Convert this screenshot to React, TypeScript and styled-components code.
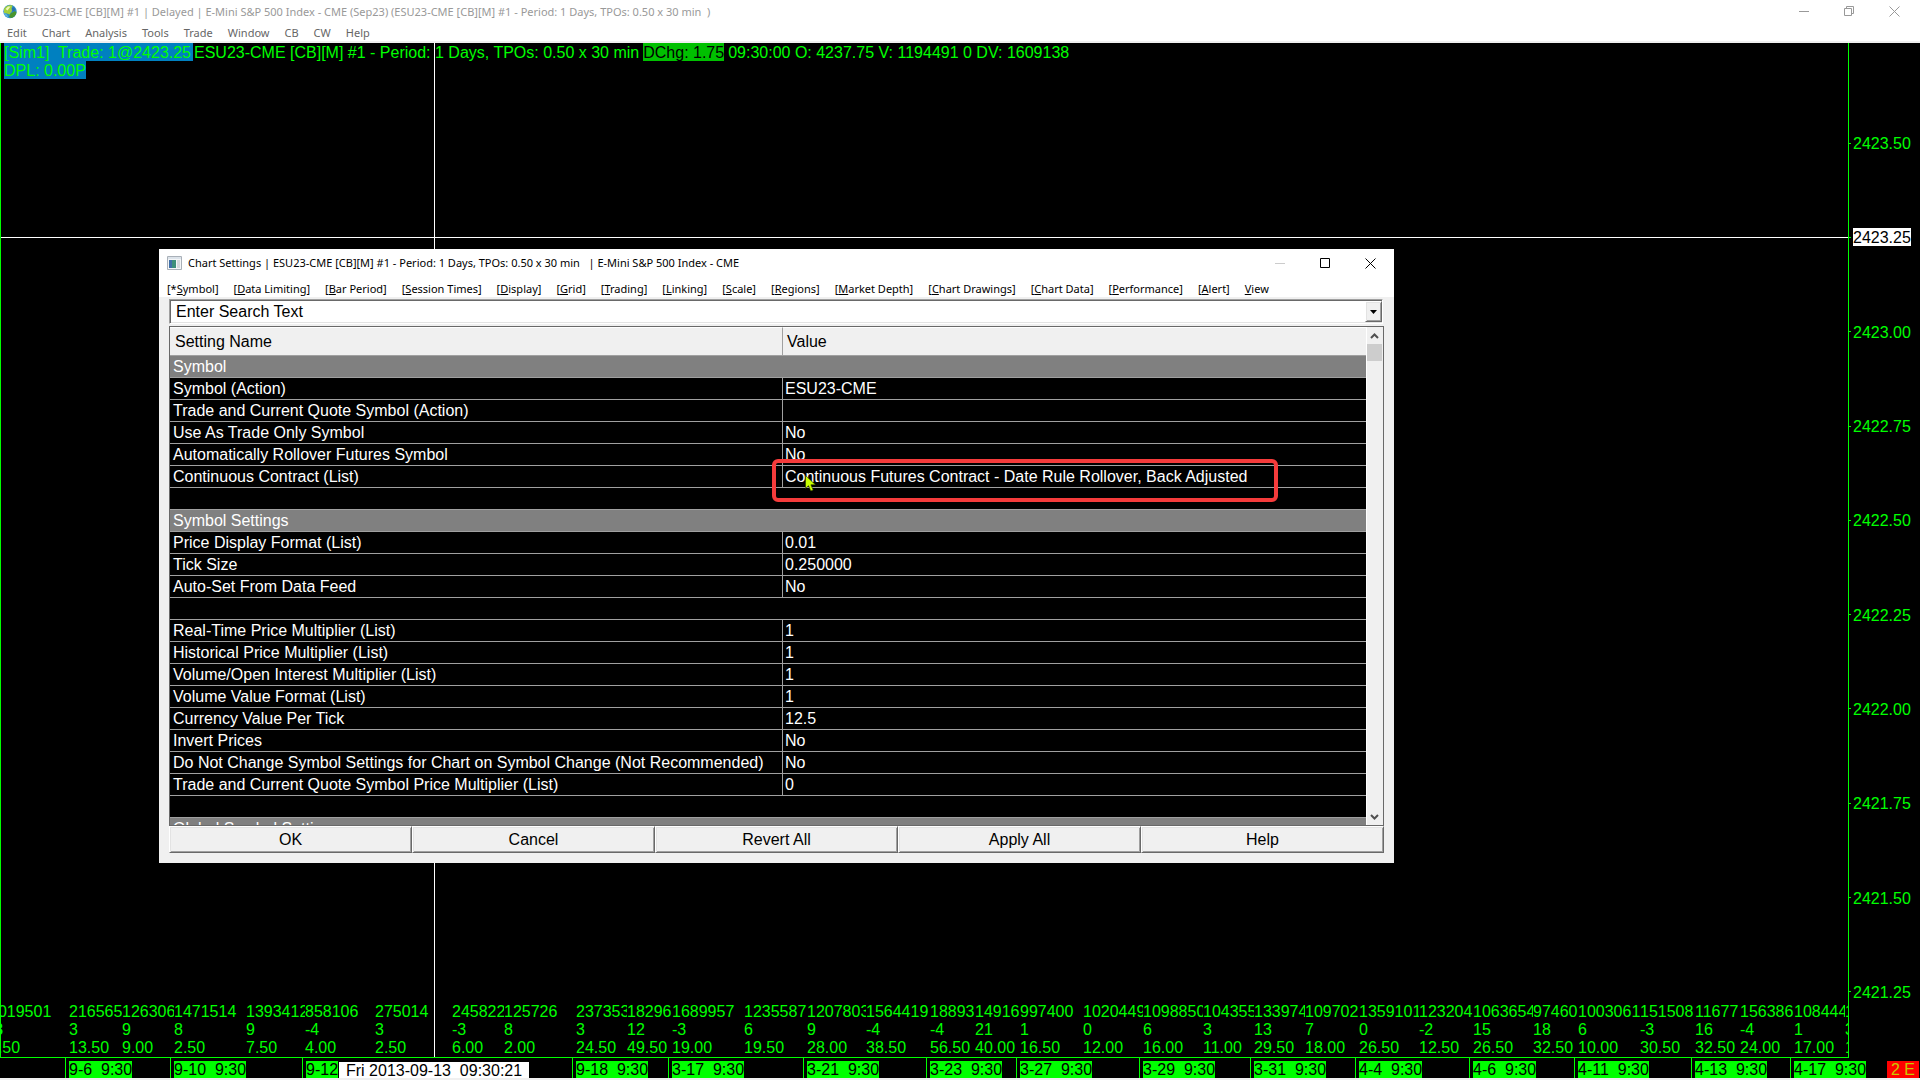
import React from "react";
import styled, { createGlobalStyle, css } from "styled-components";

const GREEN = "#00ff00";
const UI_FONT = `"Noto Sans", "Open Sans", sans-serif`;
const CHART_FONT = `"Liberation Sans", Arial, sans-serif`;

const GlobalStyle = createGlobalStyle`
  *, *::before, *::after { box-sizing: border-box; }
  body { margin: 0; background: #000; font-family: ${CHART_FONT}; font-size: 16px; }
  button, input { font: inherit; color: inherit; margin: 0; padding: 0; border: 0; border-radius: 0; background: none; }
`;

const Page = styled.div`
  display: flex;
  flex-direction: column;
  height: 100vh;
  overflow: hidden;
`;

/* ---------- Main window chrome ---------- */

const TitleBar = styled.header`
  display: flex;
  align-items: center;
  height: 23px;
  padding: 0 20px 0 3px;
  gap: 6px;
  background: #fff;
  color: #999;
  font: 11px/16px ${UI_FONT};
`;

const TitleText = styled.h1`
  flex: 1;
  margin: 0;
  font: inherit;
  white-space: pre;
`;

const WindowControls = styled.div<{ $gap: number }>`
  display: flex;
  gap: ${(p) => p.$gap}px;
`;

const ControlButton = styled.button<{ $color: string }>`
  display: flex;
  width: 11px;
  height: 11px;
  color: ${(p) => p.$color};
`;

const MenuBar = styled.nav`
  display: flex;
  align-items: center;
  height: 20px;
  padding: 2px 7px 0;
  gap: 15px;
  background: #fff;
  border-bottom: 2px solid #f0f0f0;
  color: #666;
  font: 11px/16px ${UI_FONT};
`;

const MenuButton = styled.button`
  white-space: nowrap;
`;

/* ---------- Chart ---------- */

const Chart = styled.main`
  position: relative;
  flex: 1;
  display: flex;
  flex-direction: column;
  min-height: 0;
  background: #000;
  color: ${GREEN};
  line-height: 18px;
`;

const ChartBody = styled.div`
  flex: 1;
  display: flex;
  min-height: 0;
`;

const Plot = styled.section`
  position: relative;
  flex: 1;
  min-width: 0;
  display: flex;
  flex-direction: column;
  justify-content: space-between;
  border-left: 1px solid ${GREEN};
  border-bottom: 1px solid ${GREEN};
`;

const Legend = styled.div`
  display: flex;
  flex-direction: column;
  align-items: flex-start;
  padding-left: 3px;
  line-height: 20px;
  white-space: pre;
`;

const LegendLine = styled.div`
  display: flex;
  height: 18px;
`;

const Trade = styled.span`
  padding-right: 2px;
  margin-right: 1px;
  background: #0080c0;
`;

const Position = styled.span`
  height: 18px;
  background: #0080c0;
`;

const Change = styled.span`
  margin: 0 4px;
  background: #00c000;
  color: #000;
`;

const VolumeStrip = styled.div`
  display: flex;
  overflow: hidden;
`;

const VolumeCell = styled.div<{ $width: number; $first: boolean }>`
  flex: none;
  width: ${(p) => p.$width}px;
  margin-left: ${(p) => (p.$first ? -12 : 0)}px;
  overflow: hidden;
  display: flex;
  flex-direction: column;
  white-space: nowrap;
`;

const PriceAxis = styled.aside`
  flex: none;
  display: flex;
  flex-direction: column;
  width: 72px;
  padding: 53px 0 19px;
  border-left: 1px solid ${GREEN};
`;

const PriceTick = styled.div`
  flex: 1;
  display: flex;
  align-items: center;
  gap: 2px;

  &::before {
    content: "";
    width: 2px;
    height: 1px;
    background: ${GREEN};
  }
`;

const PriceLabel = styled.span<{ $current: boolean }>`
  height: 18px;
  line-height: 19px;
  ${(p) =>
    p.$current &&
    css`
      background: #fff;
      color: #000;
    `}
`;

const TimeAxis = styled.footer`
  position: relative;
  display: flex;
  height: 20px;
  white-space: pre;
`;

const TimeSegment = styled.div<{ $width: number }>`
  flex: none;
  display: flex;
  align-items: flex-end;
  width: ${(p) => p.$width}px;
  padding-left: 3px;
  border-left: 1px solid ${GREEN};

  &:first-child {
    border-left-color: transparent;
  }
`;

const TimeLabel = styled.span`
  height: 17px;
  background: ${GREEN};
  color: #000;
`;

const CursorTime = styled.output`
  position: absolute;
  left: 339px;
  bottom: 0;
  height: 16px;
  padding: 0 7px;
  background: #fff;
  color: #000;
  line-height: 17px;
`;

const AlertBadge = styled.span`
  height: 17px;
  margin: auto 1px 0 auto;
  padding: 0 4px;
  background: #ff0000;
  color: #c8c800;
`;

const CrosshairX = styled.div`
  position: absolute;
  top: 194px;
  left: 0;
  right: 0;
  height: 1px;
  background: #fff;
`;

const CrosshairY = styled.div`
  position: absolute;
  top: 0;
  bottom: 0;
  left: 433px;
  width: 1px;
  background: #fff;
`;

const BottomEdge = styled.div`
  height: 2px;
  background: #f0f0f0;
`;

/* ---------- Settings dialog ---------- */

const Dialog = styled.section`
  position: absolute;
  top: 206px;
  left: 159px;
  display: flex;
  flex-direction: column;
  width: 1235px;
  height: 614px;
  background: #f0f0f0;
  color: #000;
`;

const DialogTitle = styled.header`
  display: flex;
  align-items: center;
  height: 28px;
  padding: 0 18px 0 8px;
  gap: 6px;
  background: #fff;
  font: 11px/16px ${UI_FONT};
`;

const DialogMenu = styled.nav`
  display: flex;
  align-items: center;
  height: 20px;
  padding: 4px 8px 0;
  gap: 15px;
  background: #fff;
  font: 11px/16px ${UI_FONT};
`;

const DialogBody = styled.div`
  flex: 1;
  display: flex;
  flex-direction: column;
  min-height: 0;
  padding: 2px 10px 10px;
`;

const SearchBox = styled.div`
  display: flex;
  height: 25px;
  margin: 0 1px 2px 0;
  border: 1px solid #a0a0a0;
  border-right-color: #fff;
  border-bottom-color: #fff;
  background: #fff;
  box-shadow: inset 1px 1px #696969, inset -1px -1px #e3e3e3;
`;

const SearchInput = styled.input`
  flex: 1;
  padding: 0 6px;
  outline: 0;

  &::placeholder {
    color: #000;
    opacity: 1;
  }
`;

const raised = css`
  border: 1px solid #fff;
  border-right-color: #696969;
  border-bottom-color: #696969;
  background: #f0f0f0;
  box-shadow: inset 1px 1px #e3e3e3, inset -1px -1px #a0a0a0;
`;

const DropButton = styled.button`
  ${raised}
  display: flex;
  align-items: center;
  justify-content: center;
  width: 17px;
  margin: 1px 0;
`;

const ListFrame = styled.div`
  flex: 1;
  display: flex;
  min-height: 0;
  overflow: hidden;
  border: 1px solid #696969;
  background: #000;
`;

const TableClip = styled.div`
  flex: 1;
  overflow: hidden;
`;

const SettingsTable = styled.table`
  width: 100%;
  table-layout: fixed;
  border-collapse: separate;
  border-spacing: 0;
  color: #fff;
  line-height: 21px;
`;

const HeadCell = styled.th<{ $width?: string }>`
  width: ${(p) => p.$width ?? "auto"};
  height: 29px;
  padding: 0 5px;
  border-top: 1px solid #fff;
  border-bottom: 1px solid #a0a0a0;
  background: #f0f0f0;
  color: #000;
  font-weight: 400;
  text-align: left;

  & + & {
    border-left: 1px solid #a0a0a0;
    padding: 0 4px;
  }
`;

const Cell = styled.td<{ $group?: boolean }>`
  height: 22px;
  padding: 0 3px;
  border-bottom: 1px solid #a0a0a0;
  background: ${(p) => (p.$group ? "#808080" : "#000")};
  white-space: nowrap;

  & + & {
    border-left: 1px solid #a0a0a0;
    padding: 0 2px;
  }
`;

const Scrollbar = styled.div`
  display: flex;
  flex-direction: column;
  width: 17px;
  border-left: 1px solid #fff;
  background: #f0f0f0;
`;

const ScrollButton = styled.button`
  display: flex;
  align-items: center;
  justify-content: center;
  height: 17px;
  padding-right: 1px;
  color: #505050;
`;

const ScrollTrack = styled.div`
  flex: 1;
`;

const ScrollThumb = styled.div`
  height: 17px;
  margin-right: 1px;
  background: #cdcdcd;
`;

const ButtonRow = styled.div`
  display: flex;
`;

const ActionButton = styled.button`
  ${raised}
  flex: 1;
  height: 27px;
`;

/* ---------- Overlays ---------- */

const Highlight = styled.div`
  position: absolute;
  top: 416px;
  left: 772px;
  width: 506px;
  height: 43px;
  border: 4px solid #f53b3b;
  border-radius: 6px;
`;

const Pointer = styled.svg`
  position: absolute;
  top: 432px;
  left: 805px;
`;

/* ---------- Icons ---------- */

const Globe = () => (
  <svg width="14" height="15" viewBox="0 0 14 15" aria-hidden="true">
    <circle cx="7" cy="7.5" r="6.7" fill="#2f8fc4" />
    <path d="M1 5C2.500 2 6 .5 9.500 1.500L8.500 4.500 9 7 6.500 10.500 4 9.500 1 9Z" fill="#a4cf3a" />
    <path d="M7.500 9.500 12 7 13.500 8.500C13 11 11 13.500 8.500 14L6 13Z" fill="#4a962c" />
    <path d="M9 4 11 3 12.500 6 9.500 8Z" fill="#2a6fae" />
    <path d="M2.500 5 5 2.500 7.500 2.500 4.500 6.500Z" fill="#eef8b8" />
    <path d="M1 8.500 4 10.500 5.500 13.500C3 13 1 11 1 8.500Z" fill="#5db4dd" />
  </svg>
);

const AppIcon = () => (
  <svg width="15" height="14" viewBox="0 0 15 14" aria-hidden="true">
    <path d="M.5.500h14v13H.500Z" fill="#f4f6f8" stroke="#a9b0b8" />
    <path d="M1 1h13v2H1Z" fill="#dce3ea" />
    <path d="M2 4h7v8H2Z" fill="#3d8f7a" />
    <path d="M2 4h3v8H2Z" fill="#3f6fa8" />
    <path d="M10 4h3v8h-3Z" fill="#d4d8dc" />
  </svg>
);

const MinimizeIcon = () => (
  <svg width="11" height="11" aria-hidden="true">
    <path d="M0 5.500h10" stroke="currentColor" />
  </svg>
);

const RestoreIcon = () => (
  <svg width="11" height="11" aria-hidden="true">
    <path d="M.5 2.500h7v7h-7ZM2.500 2.500v-2h7v7h-2" fill="none" stroke="currentColor" />
  </svg>
);

const MaximizeIcon = () => (
  <svg width="11" height="11" aria-hidden="true">
    <path d="M.5.500h9v9h-9Z" fill="none" stroke="currentColor" />
  </svg>
);

const CloseIcon = () => (
  <svg width="11" height="11" aria-hidden="true">
    <path d="M.5.500l10 10M10.500.500l-10 10" stroke="currentColor" />
  </svg>
);

const Chevron = ({ down }: { down?: boolean }) => (
  <svg width="9" height="6" aria-hidden="true">
    <path d={down ? "M1 1l3.500 3.500L8 1" : "M1 5l3.500-3.500L8 5"} fill="none" stroke="currentColor" strokeWidth="2" />
  </svg>
);

/* ---------- Data ---------- */

const mainMenu = ["Edit", "Chart", "Analysis", "Tools", "Trade", "Window", "CB", "CW", "Help"];

/* [text before the access key, access key, rest] */
const dialogMenu: [string, string, string][] = [
  ["[*", "S", "ymbol]"],
  ["[", "D", "ata Limiting]"],
  ["[", "B", "ar Period]"],
  ["[", "S", "ession Times]"],
  ["[", "D", "isplay]"],
  ["[", "G", "rid]"],
  ["[", "T", "rading]"],
  ["[", "L", "inking]"],
  ["[", "S", "cale]"],
  ["[", "R", "egions]"],
  ["[", "M", "arket Depth]"],
  ["[", "C", "hart Drawings]"],
  ["[", "C", "hart Data]"],
  ["[", "P", "erformance]"],
  ["[", "A", "lert]"],
  ["", "V", "iew"],
];

const prices = ["2423.50", "2423.25", "2423.00", "2422.75", "2422.50", "2422.25", "2422.00", "2421.75", "2421.50", "2421.25"];

/* [column width, volume, change, range] */
const sessions: [number, string, string, string][] = [
  [80, "1019501", "-3", "3.50"],
  [53, "216565", "3", "13.50"],
  [52, "126306", "9", "9.00"],
  [72, "1471514", "8", "2.50"],
  [59, "1393412", "9", "7.50"],
  [70, "858106", "-4", "4.00"],
  [77, "275014", "3", "2.50"],
  [52, "245822", "-3", "6.00"],
  [72, "125726", "8", "2.00"],
  [51, "237353", "3", "24.50"],
  [45, "18296", "12", "49.50"],
  [72, "1689957", "-3", "19.00"],
  [63, "1235587", "6", "19.50"],
  [59, "1207803", "9", "28.00"],
  [64, "1564419", "-4", "38.50"],
  [45, "18893", "-4", "56.50"],
  [45, "14916", "21", "40.00"],
  [63, "997400", "1", "16.50"],
  [60, "1020449", "0", "12.00"],
  [60, "1098850", "6", "16.00"],
  [51, "104355", "3", "11.00"],
  [51, "133974", "13", "29.50"],
  [54, "109702", "7", "18.00"],
  [60, "1359101", "0", "26.50"],
  [54, "123204", "-2", "12.50"],
  [60, "1063654", "15", "26.50"],
  [45, "97460", "18", "32.50"],
  [62, "1003061", "6", "10.00"],
  [55, "151508", "-3", "30.50"],
  [45, "11677", "16", "32.50"],
  [54, "156386", "-4", "24.00"],
  [51, "108444", "1", "17.00"],
  [9, "1", "3", "1"],
];

const dates: [number, string][] = [
  [65, ""],
  [105, "9-6  9:30"],
  [132, "9-10  9:30"],
  [270, "9-12"],
  [96, "9-18  9:30"],
  [135, "3-17  9:30"],
  [123, "3-21  9:30"],
  [90, "3-23  9:30"],
  [123, "3-27  9:30"],
  [111, "3-29  9:30"],
  [105, "3-31  9:30"],
  [114, "4-4  9:30"],
  [105, "4-6  9:30"],
  [117, "4-11  9:30"],
  [99, "4-13  9:30"],
  [75, "4-17  9:30"],
];

type Row = { group: string } | { name: string; value: string } | null;

const settings: Row[] = [
  { group: "Symbol" },
  { name: "Symbol (Action)", value: "ESU23-CME" },
  { name: "Trade and Current Quote Symbol (Action)", value: "" },
  { name: "Use As Trade Only Symbol", value: "No" },
  { name: "Automatically Rollover Futures Symbol", value: "No" },
  { name: "Continuous Contract (List)", value: "Continuous Futures Contract - Date Rule Rollover, Back Adjusted" },
  null,
  { group: "Symbol Settings" },
  { name: "Price Display Format (List)", value: "0.01" },
  { name: "Tick Size", value: "0.250000" },
  { name: "Auto-Set From Data Feed", value: "No" },
  null,
  { name: "Real-Time Price Multiplier (List)", value: "1" },
  { name: "Historical Price Multiplier (List)", value: "1" },
  { name: "Volume/Open Interest Multiplier (List)", value: "1" },
  { name: "Volume Value Format (List)", value: "1" },
  { name: "Currency Value Per Tick", value: "12.5" },
  { name: "Invert Prices", value: "No" },
  { name: "Do Not Change Symbol Settings for Chart on Symbol Change (Not Recommended)", value: "No" },
  { name: "Trade and Current Quote Symbol Price Multiplier (List)", value: "0" },
  null,
  { group: "Global Symbol Settings" },
];

const SettingRow = ({ row }: { row: Row }) => {
  if (row === null) return <tr><Cell colSpan={2} /></tr>;
  if ("group" in row) return <tr><Cell colSpan={2} $group>{row.group}</Cell></tr>;
  return (
    <tr>
      <Cell>{row.name}</Cell>
      <Cell>{row.value}</Cell>
    </tr>
  );
};

const ChartSettings = () => (
  <Dialog role="dialog" aria-label="Chart Settings">
    <DialogTitle>
      <AppIcon />
      <TitleText as="h2">{"Chart Settings | ESU23-CME [CB][M] #1 - Period: 1 Days, TPOs: 0.50 x 30 min   | E-Mini S&P 500 Index - CME"}</TitleText>
      <WindowControls $gap={34}>
        <ControlButton $color="#ccc" aria-label="Minimize"><MinimizeIcon /></ControlButton>
        <ControlButton $color="#000" aria-label="Maximize"><MaximizeIcon /></ControlButton>
        <ControlButton $color="#000" aria-label="Close"><CloseIcon /></ControlButton>
      </WindowControls>
    </DialogTitle>
    <DialogMenu>
      {dialogMenu.map(([before, key, after]) => (
        <MenuButton key={key + after}>{before}<u>{key}</u>{after}</MenuButton>
      ))}
    </DialogMenu>
    <DialogBody>
      <SearchBox>
        <SearchInput aria-label="Search settings" placeholder="Enter Search Text" />
        <DropButton aria-label="Show recent searches">
          <svg width="7" height="4" aria-hidden="true"><path d="M0 0h7L3.500 4Z" /></svg>
        </DropButton>
      </SearchBox>
      <ListFrame>
        <TableClip>
          <SettingsTable>
            <thead>
              <tr>
                <HeadCell $width="612px">Setting Name</HeadCell>
                <HeadCell>Value</HeadCell>
              </tr>
            </thead>
            <tbody>
              {settings.map((row, i) => <SettingRow key={i} row={row} />)}
            </tbody>
          </SettingsTable>
        </TableClip>
        <Scrollbar>
          <ScrollButton aria-label="Scroll up"><Chevron /></ScrollButton>
          <ScrollTrack><ScrollThumb /></ScrollTrack>
          <ScrollButton aria-label="Scroll down"><Chevron down /></ScrollButton>
        </Scrollbar>
      </ListFrame>
      <ButtonRow>
        {["OK", "Cancel", "Revert All", "Apply All", "Help"].map((label) => (
          <ActionButton key={label}>{label}</ActionButton>
        ))}
      </ButtonRow>
    </DialogBody>
  </Dialog>
);

export default function App() {
  return (
    <Page>
      <GlobalStyle />
      <TitleBar>
        <Globe />
        <TitleText>{"ESU23-CME [CB][M] #1 | Delayed | E-Mini S&P 500 Index - CME (Sep23) (ESU23-CME [CB][M] #1 - Period: 1 Days, TPOs: 0.50 x 30 min  )"}</TitleText>
        <WindowControls $gap={34}>
          <ControlButton $color="#999" aria-label="Minimize"><MinimizeIcon /></ControlButton>
          <ControlButton $color="#999" aria-label="Restore"><RestoreIcon /></ControlButton>
          <ControlButton $color="#999" aria-label="Close"><CloseIcon /></ControlButton>
        </WindowControls>
      </TitleBar>
      <MenuBar>
        {mainMenu.map((item) => <MenuButton key={item}>{item}</MenuButton>)}
      </MenuBar>
      <Chart>
        <ChartBody>
          <Plot>
            <Legend>
              <LegendLine>
                <Trade>{"[Sim1]  Trade: 1@2423.25"}</Trade>
                <span>{"ESU23-CME [CB][M] #1 - Period: 1 Days, TPOs: 0.50 x 30 min"}</span>
                <Change>DChg: 1.75</Change>
                <span>09:30:00 O: 4237.75 V: 1194491 0 DV: 1609138</span>
              </LegendLine>
              <Position>DPL: 0.00P</Position>
            </Legend>
            <VolumeStrip>
              {sessions.map(([width, volume, change, range], i) => (
                <VolumeCell key={i} $width={width} $first={i === 0}>
                  <span>{volume}</span>
                  <span>{change}</span>
                  <span>{range}</span>
                </VolumeCell>
              ))}
            </VolumeStrip>
            <CrosshairX />
            <CrosshairY />
          </Plot>
          <PriceAxis>
            {prices.map((price) => (
              <PriceTick key={price}>
                <PriceLabel $current={price === "2423.25"}>{price}</PriceLabel>
              </PriceTick>
            ))}
          </PriceAxis>
        </ChartBody>
        <TimeAxis>
          {dates.map(([width, label]) => (
            <TimeSegment key={width + label} $width={width}>
              {label && <TimeLabel>{label}</TimeLabel>}
            </TimeSegment>
          ))}
          <AlertBadge>2 E</AlertBadge>
          <CursorTime>{"Fri 2013-09-13  09:30:21"}</CursorTime>
        </TimeAxis>
        <ChartSettings />
        <Highlight />
        <Pointer width="12" height="18" viewBox="0 0 12 18" aria-hidden="true">
          <path d="M.5.500v13l3-2.800 2.300 5.300 2.400-1-2.300-5.200h4.600Z" fill="#c8ff00" stroke="#243000" strokeWidth=".6" />
        </Pointer>
      </Chart>
      <BottomEdge />
    </Page>
  );
}
